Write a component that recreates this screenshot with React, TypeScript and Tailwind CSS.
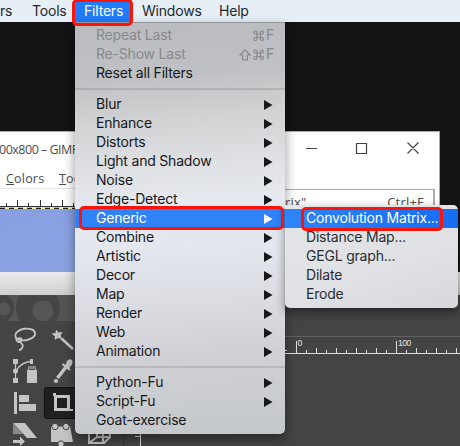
import React from "react";

type Item = { label: string; shortcut?: string; arrow?: boolean; disabled?: boolean; active?: boolean };

const groups: Item[][] = [
  [
    { label: "Repeat Last", shortcut: "⌘F", disabled: true },
    { label: "Re-Show Last", shortcut: "⇧⌘F", disabled: true },
    { label: "Reset all Filters" },
  ],
  ["Blur", "Enhance", "Distorts", "Light and Shadow", "Noise", "Edge-Detect", "Generic", "Combine", "Artistic", "Decor", "Map", "Render", "Web", "Animation"].map(
    (label) => ({ label, arrow: true, active: label === "Generic" }),
  ),
  [{ label: "Python-Fu", arrow: true }, { label: "Script-Fu", arrow: true }, { label: "Goat-exercise" }],
];

function Command({ x }: { x: number }) {
  return (
    <path
      transform={`translate(${x} 0)`}
      d="M4 4H7.5V7.5H4ZM4 4V2.6A1.5 1.5 0 1 0 2.5 4ZM7.5 4V2.6A1.5 1.5 0 1 1 9 4ZM4 7.5H2.5A1.5 1.5 0 1 0 4 9ZM7.5 7.5H9A1.5 1.5 0 1 1 7.5 9Z"
    />
  );
}

function Shortcut({ shift }: { shift: boolean }) {
  return (
    <span className="flex items-center">
      <svg width="26" height="12" viewBox="0 0 26 12" fill="none" stroke="currentColor" strokeWidth="1.2">
        {shift && <path d="M6 .8L11 6H8.4V10.800H3.6V6H1Z" />}
        <Command x={14} />
      </svg>
      <span className="ml-px pb-[2px]">F</span>
    </span>
  );
}

function Row({ item }: { item: Item }) {
  const tone = item.active ? "bg-[#2f82f7] text-white" : item.disabled ? "text-[#88898c]" : "text-[#17181b]";
  return (
    <div className={`flex h-[19px] items-center justify-between pl-[21px] pr-[11px] ${tone}`}>
      <span className="pb-[2px]">{item.label}</span>
      {item.shortcut && <Shortcut shift={item.shortcut.length > 2} />}
      {item.arrow && (
        <svg width="10" height="10" viewBox="0 0 10 10" className="mr-px">
          <path d="M1 0L9.5 5L1 10Z" fill="currentColor" />
        </svg>
      )}
    </div>
  );
}

function FilterMenu() {
  return (
    <div className="absolute left-[75px] top-[22px] w-[210px] rounded-b-[5px] border-t border-[#929497] bg-[linear-gradient(176deg,#b9bbbe_0%,#bfc1c4_14%,#d0d2d4_24%,#dddfe2_34%,#e6e9ef_44%,#e4e7ee_54%,#dadce2_68%,#cfd1d5_80%,#c5c8cb_100%)] pb-1 pt-[3px] shadow-[0_5px_12px_rgba(0,0,0,0.42)]">
      {groups.map((group, i) => (
        <div key={i}>
          {i > 0 && (
            <div className="flex h-3 items-center">
              <div className="h-[2px] w-full bg-black/10" />
            </div>
          )}
          {group.map((item) => (
            <Row key={item.label} item={item} />
          ))}
        </div>
      ))}
    </div>
  );
}

function SubMenu() {
  return (
    <div className="absolute left-[285px] top-[205px] w-[173px] rounded-[5px] rounded-tl-none bg-[linear-gradient(160deg,#e4e5e7,#dfe1e5_60%,#d6d8dc)] py-1 shadow-[0_4px_10px_rgba(0,0,0,0.45)]">
      {["Convolution Matrix...", "Distance Map...", "GEGL graph...", "Dilate", "Erode"].map((label, i) => (
        <div key={label} className={`flex h-[19px] items-center pb-[2px] pl-[21px] ${i === 0 ? "bg-[linear-gradient(90deg,#3084f9,#176cf3)] text-white" : "text-[#2c2d30]"}`}>
          {label}
        </div>
      ))}
    </div>
  );
}

function MenuBar() {
  return (
    <div className="relative flex h-[22px] shrink-0 items-center bg-[#e6eef6] text-[#24282d]">
      <span className="w-[32px] shrink-0 pb-px">rs</span>
      <span className="w-[43px] shrink-0 pb-px">Tools</span>
      <span className="flex h-full w-[57px] shrink-0 items-center bg-[#217bfa] pb-px pl-[9px] text-white">Filters</span>
      <span className="w-[87px] shrink-0 pb-px pl-[10px]">Windows</span>
      <span className="pb-px">Help</span>
    </div>
  );
}

function GimpWindow() {
  return (
    <div className="relative h-[141px] w-[440px] border-r border-t border-[#aaa] bg-white font-['Open_Sans',sans-serif] text-[12.500px] text-[#4c4d52]">
      <div className="flex h-[38px] items-center justify-between pb-[4px] pr-[20px]">
        <span className="-ml-px tracking-[-0.500px]">00x800 – GIMP</span>
        <svg width="114" height="14" viewBox="0 0 114 14" fill="none" stroke="#444" strokeWidth="1.2">
          <path d="M1 6.500H12M51.5 1.500H61.5V11.500H51.5ZM102.500 .500L113.500 11.5M113.500 .500L102.500 11.5" />
        </svg>
      </div>
      <div className="flex h-[18px] items-center pb-[2px] pl-[6px] tracking-[0.200px]">
        <span className="w-[53px] shrink-0"><u>C</u>olors</span>
        <span><u>T</u>ools</span>
      </div>
      <div className="flex h-[21px]">
        <svg width="90" height="21" viewBox="0 0 90 21" stroke="#333" fill="none">
          <path d="M0 .5H90" stroke="#e5e5e5" />
          <path d="M0 18.5H90" />
          <path d="M6.5 15V18M17.5 12V18M28.5 15V18M40.5 12V18M51.5 15V18M62.5 12V18M73.5 15V18" />
          <path d="M0 20H90" stroke="#eef0a0" strokeWidth="2" />
          <path d="M0 20.3H90" stroke="#222" strokeWidth="1.2" strokeDasharray="5 4" />
        </svg>
      </div>
      <div className="h-[63px] bg-[linear-gradient(160deg,#879fe0,#93aaea)]" />
      <div className="absolute left-[285px] top-[57px] flex h-[20px] w-[150px] items-center justify-between border-r-2 border-t border-[#aaa] bg-white pr-[9px] pt-[6px] text-[13px] tracking-[0.200px]">
        <span>rix"</span>
        <span>Ctrl+F</span>
      </div>
    </div>
  );
}

function Tools() {
  return (
    <svg width="160" height="151" viewBox="0 295 160 151" className="shrink-0" fill="#c4c4c4">
      <rect y="295" width="75" height="26" fill="#555" />
      <clipPath id="head"><rect y="295" width="75" height="26" /></clipPath>
      <g clipPath="url(#head)">
        <circle cx="-1" cy="308" r="15" fill="#454545" />
        <circle cx="4" cy="309" r="6.500" fill="#555" />
        <circle cx="38" cy="308" r="22" fill="#454545" />
        <circle cx="43" cy="311" r="10.500" fill="#555" />
      </g>
      <g fill="none" stroke="#c4c4c4" strokeWidth="1.8">
        <ellipse cx="25.2" cy="334.500" rx="10" ry="5.800" transform="rotate(-8 25.2 334.5)" />
        <path d="M16 338Q17 344 21 341Q23 337 18 338.500M19 341Q24 345 22.500 347Q21.500 350 19 350" />
        <path d="M61.500 338.500L73 349" strokeWidth="2.6" />
        <path d="M15.500 362V380M17 369.500Q22 362 31 361.500" strokeWidth="1.3" />
        <path d="M57.500 378L66 367" strokeWidth="3.4" />
        <path d="M62.500 364L70 370" strokeWidth="2.2" />
      </g>
      <path d="M56 329.500L58.500 332.500L62.500 332L60.500 335.500L62 339L58 338L54.500 340L55 336.500L51.500 333.500L55.500 333Z" />
      <path d="M65 366L67 361Q69.500 358 72 360Q73.500 362 71 366L68.500 369Z" /><circle cx="56" cy="381" r="2.100" />
      <path d="M13 359H18V364H13ZM13 378H18V383H13ZM30 359H33V364H30ZM29 370H35V369H36L37 371V383H27V371L28 369H29Z" />
      <path d="M28 366H36V369H28Z" fill="#888" />
      <circle cx="15.500" cy="371" r="2.500" />
      <path d="M14 392H17V414H14ZM19 395H29V402H19ZM19 404H36V411H19Z" />
      <rect x="44.500" y="387.500" width="40" height="31" rx="2" fill="#202020" stroke="#121212" />
      <path d="M55.500 396.500H68.500V409.500H55.500Z" fill="none" stroke="#c4c4c4" strokeWidth="3" />
      <path d="M53 393H56V396H53ZM70 409H73V411H70Z" />
      <path d="M13 423H25L37 438H27L13 423Z" /><path d="M13 423V434H23Z" fill="#888" />
      <path d="M13 440H20V436.500L25 441.500L20 446V443H13Z" />
      <path d="M51 427L70 426L73 442H51Z" />
      <g stroke="#444" strokeWidth="1"><circle cx="55" cy="426.500" r="3.200" /><circle cx="66" cy="426.500" r="3.200" /><circle cx="61" cy="444" r="3.200" /></g>
      <path d="M89 428V443H104L110 437V428M97 428V437H110M89 443L97 437M103 428V443" fill="none" stroke="#c4c4c4" strokeWidth="2" />
      <path d="M123.500 434V446" stroke="#333" /><path d="M140.500 434V446M135 436.500H140" stroke="#ddd" />
    </svg>
  );
}

const ticks = Array.from({ length: 17 }, (_, i) => i);

function Ruler() {
  return (
    <svg width="175" height="24" viewBox="285 334 175 24" className="font-['Liberation_Sans',sans-serif] text-[8.500px]">
      <path d="M285 336.500H460" stroke="#626262" />
      <path d="M285 353.500H460M285 350.500H287" stroke="#ddd" />
      {ticks.map((i) => (
        <path key={i} d={`M${296.5 + i * 10} ${i % 10 === 0 ? 341 : i % 2 ? 350 : 348}V353`} stroke="#ddd" />
      ))}
      <text x="297.500" y="346" fill="#e4e4e4">0</text>
      <text x="398" y="346" fill="#e4e4e4" textLength="13">100</text>
    </svg>
  );
}

function RedBox({ place }: { place: string }) {
  return <div className={`absolute rounded-[5px] border-[3px] border-[#fb1408] ${place}`} />;
}

export default function App() {
  return (
    <div className="relative flex h-[446px] w-[460px] flex-col overflow-hidden bg-[#131315] font-['Inter',sans-serif] text-[14px] leading-[19px] tracking-[-0.200px] whitespace-nowrap">
      <MenuBar />
      <div className="h-[109px] shrink-0 bg-[#131315]" />
      <div className="shrink-0"><GimpWindow /></div>
      <div className="h-[23px] shrink-0 bg-[linear-gradient(#ececec,#cecece)]" />
      <div className="flex h-[151px] shrink-0 items-start justify-between bg-[#444]">
        <Tools />
        <div className="pt-[39px]"><Ruler /></div>
      </div>
      <FilterMenu />
      <SubMenu />
      <RedBox place="left-[72px] top-[-1px] h-[27px] w-[61px]" />
      <RedBox place="left-[79px] top-[206px] h-[24px] w-[205px]" />
      <RedBox place="left-[301px] top-[207px] h-[24px] w-[142px]" />
    </div>
  );
}
